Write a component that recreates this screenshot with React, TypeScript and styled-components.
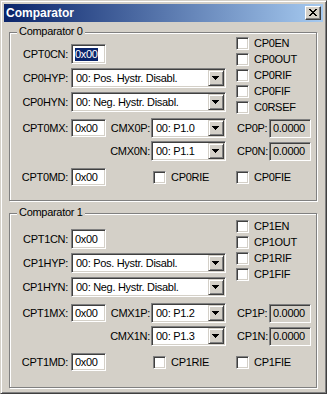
import React from 'react';
import styled, { createGlobalStyle } from 'styled-components';

const FACE = '#D4D0C8';

const GlobalStyle = createGlobalStyle`
  html, body {
    margin: 0;
    padding: 0;
    background: ${FACE};
  }
  body {
    font-family: 'Liberation Sans', Arial, sans-serif;
    font-size: 11px;
    letter-spacing: -0.3px;
    color: #000;
  }
`;

const Window = styled.div`
  box-sizing: border-box;
  width: 327px;
  height: 394px;
  background: ${FACE};
  border: 1px solid;
  border-color: ${FACE} #404040 #404040 ${FACE};
  box-shadow: inset 1px 1px #fff, inset -1px -1px #808080;
  padding: 3px;
  display: flex;
  flex-direction: column;
`;

const TitleBar = styled.div`
  height: 18px;
  flex: none;
  display: flex;
  align-items: center;
  justify-content: space-between;
  padding: 0 2px 0 2px;
  background: linear-gradient(to right, #0a246a, #a6caf0);
`;

const Title = styled.span`
  font: bold 12px 'Liberation Sans', Arial, sans-serif;
  letter-spacing: 0;
  color: #fff;
`;

const CloseButton = styled.div`
  box-sizing: border-box;
  width: 16px;
  height: 14px;
  background: ${FACE};
  border: 1px solid;
  border-color: #fff #404040 #404040 #fff;
  box-shadow: inset -1px -1px #808080;
  display: flex;
  align-items: flex-start;
  padding: 2px 0 0 3px;
`;

const Body = styled.div`
  flex: 1;
  display: flex;
  flex-direction: column;
  gap: 12px;
  padding: 10px 5px 0 5px;
`;

const GroupBox = styled.div<{ $padTop: number; $padBottom: number }>`
  position: relative;
  box-sizing: border-box;
  width: 308px;
  border: 1px solid #808080;
  box-shadow: inset 1px 1px #fff, 1px 1px #fff;
  padding: ${p => p.$padTop}px 0 ${p => p.$padBottom}px 0;
`;

const Legend = styled.span`
  position: absolute;
  top: -8px;
  left: 7px;
  padding: 0 2px;
  line-height: 13px;
  background: ${FACE};
`;

const COLUMNS = '61px 35px 45px 75px 10px 76px';

const TopBlock = styled.div`
  display: grid;
  grid-template-columns: ${COLUMNS};
  grid-template-rows: 20px 20px 20px;
  row-gap: 4px;
  align-items: center;
`;

const Row = styled.div<{ $mt: number }>`
  display: grid;
  grid-template-columns: ${COLUMNS};
  align-items: center;
  height: 20px;
  margin-top: ${p => p.$mt}px;
`;

const Label = styled.span<{ $col: number }>`
  grid-column: ${p => p.$col};
  text-align: right;
  padding-right: ${p => (p.$col === 1 ? 3 : 1)}px;
  white-space: nowrap;
  line-height: 13px;
`;

const sunken = `
  box-sizing: border-box;
  border: 1px solid;
  border-color: #808080 #fff #fff #808080;
  box-shadow: inset 1px 1px #404040, inset -1px -1px ${FACE};
`;

const TextBox = styled.div<{ $h: number }>`
  ${sunken}
  grid-column: 2;
  width: 35px;
  height: ${p => p.$h}px;
  background: #fff;
  padding-left: 3px;
  display: flex;
  align-items: center;
  line-height: 13px;
`;

const Selected = styled.span`
  background: #0a246a;
  color: #fff;
  line-height: 13px;
`;

const Select = styled.div<{ $span?: boolean }>`
  ${sunken}
  grid-column: ${p => (p.$span ? '2 / 5' : '4')};
  height: 20px;
  background: #fff;
  display: flex;
  align-items: center;
  padding: 1px 1px 1px 4px;
`;

const SelectText = styled.span`
  flex: 1;
  white-space: nowrap;
  overflow: hidden;
  line-height: 13px;
`;

const DropButton = styled.div`
  box-sizing: border-box;
  width: 16px;
  height: 16px;
  flex: none;
  background: ${FACE};
  border: 1px solid;
  border-color: ${FACE} #404040 #404040 ${FACE};
  box-shadow: inset 1px 1px #fff, inset -1px -1px #808080;
  display: flex;
  align-items: flex-start;
  padding: 5px 0 0 3px;
`;

const RightField = styled.div`
  grid-column: 6;
  display: grid;
  grid-template-columns: 33px 42px;
  align-items: center;
`;

const FieldLabel = styled.span`
  padding-left: 1px;
  white-space: nowrap;
  line-height: 13px;
`;

const ReadOnlyBox = styled.div`
  ${sunken}
  height: 19px;
  background: ${FACE};
  padding-left: 3px;
  display: flex;
  align-items: center;
  line-height: 13px;
`;

const CheckStack = styled.div<{ $offset: number }>`
  grid-column: 6;
  grid-row: 1 / 4;
  align-self: start;
  display: flex;
  flex-direction: column;
  margin: ${p => p.$offset}px 0 -30px 0;
`;

const CheckItem = styled.div<{ $col?: number; $indent?: number }>`
  ${p => (p.$col ? `grid-column: ${p.$col};` : '')}
  display: flex;
  align-items: flex-start;
  gap: 5px;
  height: 16px;
  padding-left: ${p => p.$indent ?? 0}px;
  white-space: nowrap;
  line-height: 16px;
`;

const CheckBox = styled.span`
  ${sunken}
  display: block;
  flex: none;
  width: 13px;
  height: 13px;
  margin-top: 2px;
  background: #fff;
`;

const CloseGlyph = () => (
  <svg width="8" height="7" viewBox="0 0 8 7" shapeRendering="crispEdges">
    <path
      d="M0 0h2v1H0zM6 0h2v1H6zM1 1h2v1H1zM5 1h2v1H5zM2 2h4v1H2zM3 3h2v1H3zM2 4h4v1H2zM1 5h2v1H1zM5 5h2v1H5zM0 6h2v1H0zM6 6h2v1H6z"
      fill="#000"
    />
  </svg>
);

const ArrowGlyph = () => (
  <svg width="7" height="4" viewBox="0 0 7 4" shapeRendering="crispEdges">
    <path d="M0 0h7v1H0zM1 1h5v1H1zM2 2h3v1H2zM3 3h1v1H3z" fill="#000" />
  </svg>
);

const Combo: React.FC<{ value: string; span?: boolean }> = ({ value, span }) => (
  <Select $span={span}>
    <SelectText>{value}</SelectText>
    <DropButton>
      <ArrowGlyph />
    </DropButton>
  </Select>
);

const Check: React.FC<{ label: string; col?: number; indent?: number }> = ({ label, col, indent }) => (
  <CheckItem $col={col} $indent={indent}>
    <CheckBox />
    <span>{label}</span>
  </CheckItem>
);

interface ComparatorProps {
  n: number;
  flags: string[];
  pins: [string, string];
  padTop: number;
  padBottom: number;
  stackOffset: number;
  focused?: boolean;
}

const ComparatorGroup: React.FC<ComparatorProps> = ({ n, flags, pins, padTop, padBottom, stackOffset, focused }) => (
  <GroupBox $padTop={padTop} $padBottom={padBottom}>
    <Legend>Comparator {n}</Legend>
    <TopBlock>
      <Label $col={1}>CPT{n}CN:</Label>
      <TextBox $h={20}>{focused ? <Selected>0x00</Selected> : '0x00'}</TextBox>
      <CheckStack $offset={stackOffset}>
        {flags.map(f => (
          <Check key={f} label={f} />
        ))}
      </CheckStack>
      <Label $col={1}>CP{n}HYP:</Label>
      <Combo span value="00: Pos. Hystr. Disabl." />
      <Label $col={1}>CP{n}HYN:</Label>
      <Combo span value="00: Neg. Hystr. Disabl." />
    </TopBlock>
    <Row $mt={6}>
      <Label $col={1}>CPT{n}MX:</Label>
      <TextBox $h={18}>0x00</TextBox>
      <Label $col={3}>CMX{n}P:</Label>
      <Combo value={pins[0]} />
      <RightField>
        <FieldLabel>CP{n}P:</FieldLabel>
        <ReadOnlyBox>0.0000</ReadOnlyBox>
      </RightField>
    </Row>
    <Row $mt={3}>
      <Label $col={3}>CMX{n}N:</Label>
      <Combo value={pins[1]} />
      <RightField>
        <FieldLabel>CP{n}N:</FieldLabel>
        <ReadOnlyBox>0.0000</ReadOnlyBox>
      </RightField>
    </Row>
    <Row $mt={6}>
      <Label $col={1}>CPT{n}MD:</Label>
      <TextBox $h={18}>0x00</TextBox>
      <Check col={4} indent={2} label={`CP${n}RIE`} />
      <Check col={6} label={`CP${n}FIE`} />
    </Row>
  </GroupBox>
);

export default function App() {
  return (
    <>
      <GlobalStyle />
      <Window>
        <TitleBar>
          <Title>Comparator</Title>
          <CloseButton>
            <CloseGlyph />
          </CloseButton>
        </TitleBar>
        <Body>
          <ComparatorGroup
            n={0}
            focused
            flags={['CP0EN', 'CP0OUT', 'CP0RIF', 'CP0FIF', 'C0RSEF']}
            pins={['00: P1.0', '00: P1.1']}
            padTop={11}
            padBottom={13}
            stackOffset={-9}
          />
          <ComparatorGroup
            n={1}
            flags={['CP1EN', 'CP1OUT', 'CP1RIF', 'CP1FIF']}
            pins={['00: P1.2', '00: P1.3']}
            padTop={15}
            padBottom={15}
            stackOffset={-11}
          />
        </Body>
      </Window>
    </>
  );
}
